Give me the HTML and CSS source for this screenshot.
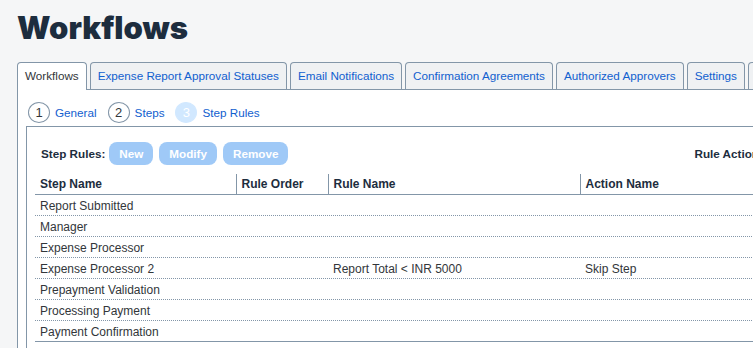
FILE: index.html
```html
<!DOCTYPE html>
<html lang="en">
<head>
    <meta charset="UTF-8">
    <meta name="viewport" content="width=device-width, initial-scale=1.0">
    <title>Workflows</title>
    <link rel="stylesheet" href="styles.css">
</head>
<body>
    <div class="page">
        <h1 class="title">Workflows</h1>

        <div class="tabs">
            <div class="tab active">Workflows</div>
            <div class="tab">Expense Report Approval Statuses</div>
            <div class="tab">Email Notifications</div>
            <div class="tab">Confirmation Agreements</div>
            <div class="tab">Authorized Approvers</div>
            <div class="tab">Settings</div>
            <div class="tab">Policies</div>
        </div>

        <div class="panel">
            <!-- Wizard steps -->
            <div class="wizard">
                <span class="step-num">1</span>
                <span class="step-link">General</span>
                <span class="step-num">2</span>
                <span class="step-link">Steps</span>
                <span class="step-num current">3</span>
                <span class="step-link">Step Rules</span>
            </div>

            <div class="box">
                <div class="toolbar">
                    <span class="label">Step Rules:</span>
                    <button class="button">New</button>
                    <button class="button">Modify</button>
                    <button class="button">Remove</button>
                    <span class="label right">Rule Actions:</span>
                </div>

                <table class="grid">
                    <colgroup>
                        <col class="c1">
                        <col class="c2">
                        <col class="c3">
                        <col class="c4">
                    </colgroup>
                    <thead>
                        <tr>
                            <th>Step Name</th>
                            <th>Rule Order</th>
                            <th>Rule Name</th>
                            <th>Action Name</th>
                        </tr>
                    </thead>
                    <tbody>
                        <tr><td>Report Submitted</td><td></td><td></td><td></td></tr>
                        <tr><td>Manager</td><td></td><td></td><td></td></tr>
                        <tr><td>Expense Processor</td><td></td><td></td><td></td></tr>
                        <tr><td>Expense Processor 2</td><td></td><td>Report Total &lt; INR 5000</td><td>Skip Step</td></tr>
                        <tr><td>Prepayment Validation</td><td></td><td></td><td></td></tr>
                        <tr><td>Processing Payment</td><td></td><td></td><td></td></tr>
                        <tr><td>Payment Confirmation</td><td></td><td></td><td></td></tr>
                    </tbody>
                </table>
            </div>
        </div>
    </div>
</body>
</html>
```

FILE: styles.css
```css
body {
    margin: 0;
    font-family: "Liberation Sans", Arial, sans-serif;
    font-size: 12px;
    color: #32363a;
    background-color: #f5f6f7;
    overflow: hidden;
}
.page {
    padding-left: 17px;
}
.title {
    margin: 8px 0 14px;
    font-family: Inter, "Liberation Sans", sans-serif;
    font-size: 31px;
    line-height: 40px;
    font-weight: 900;
    color: #1d2d3e;
}

/* Tabs */
.tabs {
    display: flex;
    gap: 3px;
    white-space: nowrap;
    font-size: 11.7px;
}
.tab {
    padding: 0 7px;
    line-height: 26px;
    color: #1160cf;
    background: #eff1f3;
    border: 1px solid #8396a8;
    border-bottom: none;
    border-radius: 4px 4px 0 0;
}
.tab.active {
    position: relative;
    color: #32363a;
    background: white;
    margin-bottom: -1px;
    padding-bottom: 1px;
}
.panel {
    background: white;
    border-top: 1px solid #8396a8;
    border-left: 1px solid #8396a8;
    padding: 12px 0 0 8px;
    min-height: 300px;
}

/* Wizard */
.wizard {
    display: flex;
    align-items: center;
    margin-left: 2px;
    height: 21px;
    font-size: 11.7px;
}
.step-num {
    box-sizing: border-box;
    width: 22px;
    height: 21px;
    border: 1px solid #8396a8;
    border-radius: 50%;
    text-align: center;
    line-height: 19px;
    font-size: 13px;
    color: #32363a;
}
.step-num.current {
    background: #d1e8ff;
    border-color: #d1e8ff;
    color: white;
}
.step-link {
    color: #1160cf;
    margin: 0 11px 0 5px;
}

/* Step rules box */
.box {
    margin-top: 3px;
    width: 1000px;
    min-height: 260px;
    border-top: 1px solid #8396a8;
    border-left: 1px solid #8396a8;
    padding: 15px 0 0 8px;
}
.toolbar {
    display: flex;
    align-items: center;
    gap: 6px;
    height: 23px;
    padding-left: 6px;
    font-size: 11.7px;
}
.label {
    font-weight: bold;
    color: #1d2d3e;
    margin-right: -2px;
}
.label.right {
    margin-left: 400px;
}
.button {
    height: 23px;
    padding: 0 10px;
    font-family: inherit;
    font-size: 11.7px;
    font-weight: bold;
    color: white;
    background: #9fc9f7;
    border: none;
    border-radius: 8px;
}

/* Table */
.grid {
    margin-top: 9px;
    width: 865px;
    table-layout: fixed;
    border-collapse: collapse;
}
.grid .c1 { width: 201px; }
.grid .c2 { width: 92px; }
.grid .c3 { width: 252px; }
.grid .c4 { width: 320px; }
.grid th {
    height: 20px;
    padding: 0 5px;
    text-align: left;
    font-weight: bold;
    color: #1d2d3e;
    border-bottom: 1px solid #8396a8;
}
.grid th + th {
    border-left: 1px solid #8396a8;
}
.grid tbody tr {
    background: linear-gradient(to right, #8396a8 50%, transparent 50%) left bottom / 2px 1px repeat-x;
}
.grid tbody tr:last-child {
    background: none;
    border-bottom: 1px solid #8396a8;
}
.grid td {
    height: 20px;
    padding: 1px 5px 0;
    white-space: nowrap;
}
.grid tr:last-child td {
    height: 19px;
}
```
